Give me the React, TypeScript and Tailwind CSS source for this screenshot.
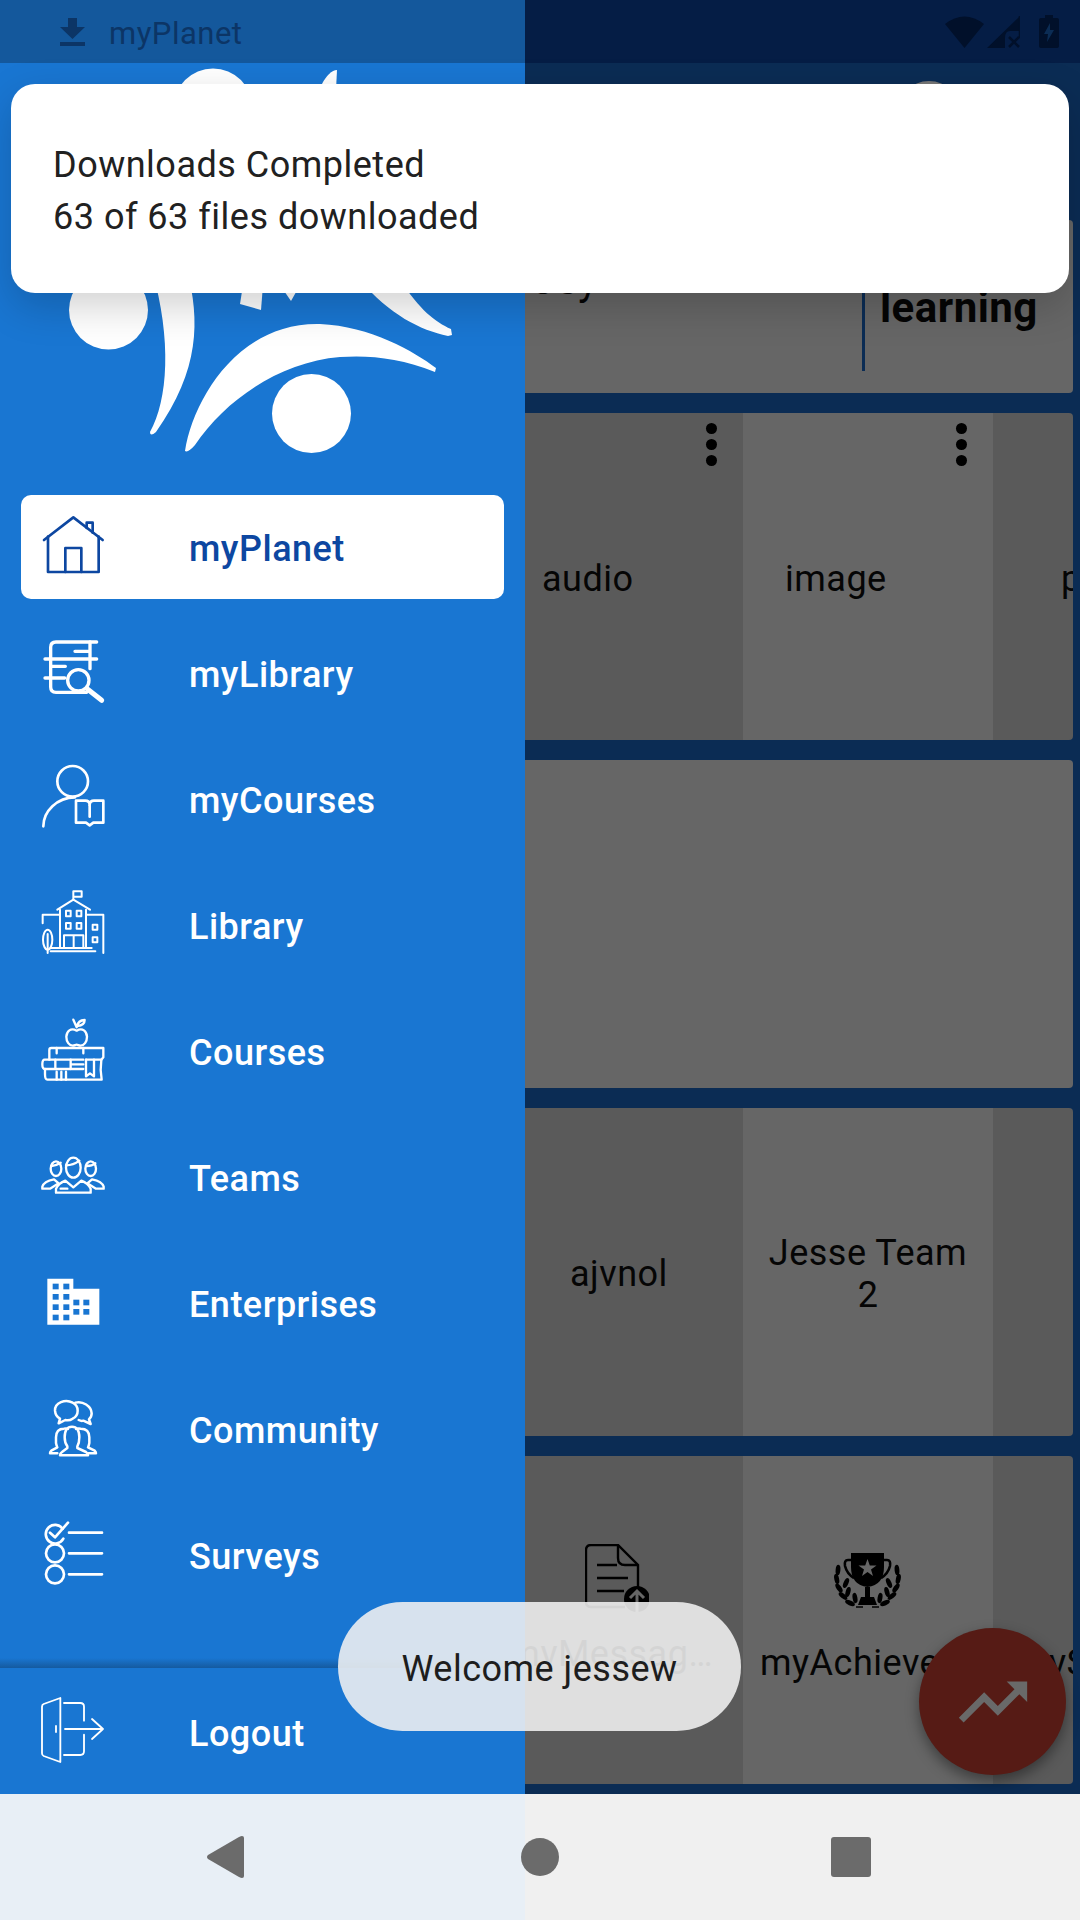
import React from 'react';

const IconBox = ({ children }: { children: React.ReactNode }) => (
  <svg
    viewBox="0 0 186 186"
    className="w-[62px] h-[62px] shrink-0 overflow-visible"
    fill="none"
    stroke="currentColor"
    strokeWidth="8"
    strokeLinecap="round"
    strokeLinejoin="round"
  >
    {children}
  </svg>
);

const HomeIcon = () => (
  <IconBox>
    <path d="M6 72 94 4 182 72" />
    <path d="M134 36V20H152V50" />
    <path d="M18 62V168H170V62" />
    <path d="M70 168V96H118V168" />
  </IconBox>
);

const MyLibraryIcon = () => (
  <IconBox>
    <g strokeWidth="10">
      <path d="M164 0H42Q26 0 26 16V51" />
      <path d="M9 51H164M99 28H144M144 0V51M144 51V80" />
      <path d="M26 51V108M26 73H70M9 108H68" />
      <path d="M26 108V135Q26 151 42 151H134" />
      <circle cx="109" cy="115" r="32" />
    </g>
    <path d="M136 141 179 175" strokeWidth="15" />
  </IconBox>
);

const MyCoursesIcon = () => (
  <IconBox>
    <circle cx="92" cy="40" r="46" />
    <path d="M4 175C4 130 45 88 99 88" />
    <path d="M102 98H130Q142 98 143 110Q144 98 156 98H184V164H154L143 172 132 164H102Z" />
    <path d="M143 112V146" />
  </IconBox>
);

const SchoolIcon = () => (
  <IconBox>
    <g strokeWidth="6">
      <path d="M94 17V-8H119V8H94" />
      <path d="M46 47 94 17 144 47" />
      <path d="M54 47V162M132 47V162" />
      <rect x="72" y="50" width="14" height="17" />
      <rect x="104" y="50" width="14" height="17" />
      <rect x="72" y="87" width="14" height="17" />
      <rect x="104" y="87" width="14" height="17" />
      <path d="M66 162V124H124V162M95 124V162" />
      <path d="M54 62H2V88M132 62H184V177" />
      <rect x="152" y="92" width="14" height="15" />
      <rect x="152" y="130" width="14" height="15" />
      <ellipse cx="17" cy="137" rx="14" ry="30" />
      <path d="M17 120V177M26 162H149M26 172H160" />
    </g>
  </IconBox>
);

const CoursesIcon = () => (
  <IconBox>
    <g strokeWidth="7">
      <path d="M104 32C122 22 134 34 135 50C135 66 126 77 116 77C110 77 108 74 104 74C100 74 98 77 92 77C82 77 73 66 73 50C74 34 86 22 104 32Z" />
      <path d="M94 -1 104 22M106 18Q108 1 128 0Q128 16 106 18Z" />
      <path d="M22 119V90Q22 84 28 84H184V112L178 119" />
      <path d="M44 84V100M124 84V100" />
      <path d="M124 119H8Q1 119 1 133Q1 147 8 147H124" />
      <path d="M40 119V147M86 119V147M124 133H86" />
      <path d="M132 119H178L176 150 179 179H16Q9 179 9 163V147" />
      <path d="M132 119V169L144 160 156 169V119" />
      <path d="M44 155V179M58 155V179M72 155V179" />
    </g>
  </IconBox>
);

const TeamsIcon = () => (
  <IconBox>
    <g strokeWidth="7">
      <ellipse cx="42" cy="68" rx="16" ry="22" />
      <ellipse cx="94" cy="65" rx="22" ry="30" />
      <ellipse cx="146" cy="68" rx="16" ry="22" />
      <path d="M28 60Q44 58 56 50M72 58Q94 58 112 44M134 60Q150 60 160 52" />
      <path d="M1 128V122Q6 106 36 100L50 112 24 128Z" />
      <path d="M185 128V122Q180 106 150 100L136 112 162 128Z" />
      <path d="M42 140V128Q50 112 70 104L94 124 118 104Q138 112 146 128V140Z" />
      <path d="M56 128H76" />
    </g>
  </IconBox>
);

const EnterpriseIcon = () => {
  const left = [32, 64];
  const leftRows = [35, 66, 97, 128];
  const right = [94, 124];
  const rightRows = [83, 111];
  return (
    <IconBox>
      <g stroke="none">
        <path d="M16 20H94V50H172V158H16Z" fill="currentColor" />
        {left.map((x) =>
          leftRows.map((y) => <rect key={`${x}-${y}`} x={x} y={y} width="18" height="17" fill="#1976d2" />),
        )}
        {right.map((x) =>
          rightRows.map((y) => <rect key={`${x}-${y}`} x={x} y={y} width="18" height="17" fill="#1976d2" />),
        )}
      </g>
    </IconBox>
  );
};

const CommunityIcon = () => (
  <IconBox>
    <g strokeWidth="7.5">
      <path d="M92 62C112 52 112 24 92 14C70 2 38 14 39 38C40 50 46 58 54 62L50 76 70 66C78 68 86 66 92 62Z" />
      <path d="M100 14C122 8 148 24 149 46C149 54 146 60 141 64L146 78 124 68C118 70 114 68 110 66" />
      <path d="M68 118Q68 86 90 86Q112 86 112 118Q112 135 106 145V150L132 162Q138 166 138 172H54Q54 166 60 162L76 150V145Q68 135 68 118Z" />
      <path d="M102 93Q108 90 116 92Q142 92 142 118V135Q140 145 138 148L158 158Q162 162 162 166H140" />
      <path d="M78 93Q72 90 66 92Q42 92 42 118V135Q44 145 46 148L28 158Q24 162 24 166H46" />
    </g>
  </IconBox>
);

const SurveysIcon = () => (
  <IconBox>
    <path d="M62 14A28 28 0 1 0 64 44" />
    <path d="M24 26 39 40 78 -4" />
    <circle cx="39" cy="88" r="27" />
    <circle cx="39" cy="151" r="27" />
    <path d="M81 26H180M81 88H180M81 151H180" />
  </IconBox>
);

const LogoutIcon = () => (
  <IconBox>
    <g strokeWidth="5.5">
      <path d="M55 -6 5 12Q0 14 0 20V160Q0 166 5 168L55 186Z" />
      <path d="M66 9H115Q126 9 126 20V62M126 104V154Q126 165 115 165H66" />
      <path d="M69 87H183M150 57 183 87 150 117" />
      <path d="M42 78V96" />
    </g>
  </IconBox>
);

const MENU = [
  { label: 'myPlanet', icon: <HomeIcon />, active: true },
  { label: 'myLibrary', icon: <MyLibraryIcon /> },
  { label: 'myCourses', icon: <MyCoursesIcon /> },
  { label: 'Library', icon: <SchoolIcon /> },
  { label: 'Courses', icon: <CoursesIcon /> },
  { label: 'Teams', icon: <TeamsIcon /> },
  { label: 'Enterprises', icon: <EnterpriseIcon /> },
  { label: 'Community', icon: <CommunityIcon /> },
  { label: 'Surveys', icon: <SurveysIcon /> },
];

const Logo = () => (
  <svg viewBox="0 63 525 421" className="w-[525px] h-[421px] block" fill="#ffffff">
    <circle cx="213" cy="108" r="39.5" />
    <circle cx="108.5" cy="310" r="39.5" />
    <circle cx="311.5" cy="413.5" r="39.5" />
    <path d="M185 451C193 400 238 322 320 324C370 326 415 352 436 368L435 372C400 358 370 355 340 357C280 362 225 400 195 445Q188 453 185 451Z" />
    <path d="M150 432C168 400 172 340 152 270L187 270C200 320 200 370 156 432Q150 437 150 432Z" />
    <path d="M360 280C390 315 420 330 448 336L452 335 451 329C435 322 420 310 400 280Z" />
    <path d="M243 285H263L261 310 240 304Z" />
    <path d="M280 285H300L291 301Z" />
    <path d="M322 84C326 76 332 70 337 70L336 90H320Z" />
  </svg>
);

const Dots = () => (
  <div className="flex flex-col gap-[5px] items-end pr-[26px] pt-[10px] h-[54px]">
    <div className="w-[11px] h-[11px] rounded-full bg-black" />
    <div className="w-[11px] h-[11px] rounded-full bg-black" />
    <div className="w-[11px] h-[11px] rounded-full bg-black" />
  </div>
);

const DocIcon = () => (
  <svg viewBox="0 0 64 69" className="w-[64px] h-[69px] block" fill="none" stroke="#000" strokeWidth="2.4">
    <path d="M40 63H6Q1 63 1 58V6Q1 1 6 1H33L53 21V48" />
    <path d="M33 1V14Q33 21 40 21H53" />
    <path d="M12 21H32M12 34H43M12 47H39" />
    <circle cx="52" cy="55" r="13" fill="#000" stroke="none" />
    <path d="M52 68V47M45 54 52 47 59 54" stroke="#666" strokeWidth="3" />
  </svg>
);

const TrophyIcon = () => {
  const leaves = [
    [5, 17, 5],
    [3.7, 26, -12],
    [6, 35, -35],
    [10, 43, -50],
    [17, 50, -65],
    [13, 30, 25],
    [15, 39, 15],
    [22, 45, -10],
  ];
  return (
    <svg viewBox="0 0 69 55" className="w-[69px] h-[55px] block" fill="#000">
      <path d="M18 0H51V14Q51 32 34.5 34Q18 32 18 14Z" />
      <path d="M18 7H15Q11 7 12 13Q14 21 21 25M51 7H54Q58 7 57 13Q55 21 48 25" fill="none" stroke="#000" strokeWidth="2.6" />
      <path
        d="M34.5 6 36.8 12.5H43.5L38 16.5 40 23 34.5 19 29 23 31 16.5 25.5 12.5H32.2Z"
        fill="#666"
      />
      <path d="M32 34H37V44H41L44 52H25L28 44H32Z" />
      <path d="M23 54H30M39 54H46" stroke="#000" strokeWidth="1.5" />
      {leaves.map(([x, y, r]) => (
        <g key={`${x}-${y}`}>
          <ellipse cx={x} cy={y} rx="2.4" ry="5.2" transform={`rotate(${r} ${x} ${y})`} />
          <ellipse cx={69 - x} cy={y} rx="2.4" ry="5.2" transform={`rotate(${-r} ${69 - x} ${y})`} />
        </g>
      ))}
    </svg>
  );
};

const App: React.FC = () => {
  return (
    <div className="relative w-[1080px] h-[1920px] overflow-hidden flex flex-col font-['Roboto',sans-serif] tracking-[.5px] bg-[#0b2c54]">
      {/* status bar */}
      <div className="h-[63px] shrink-0 flex items-center bg-[linear-gradient(to_right,#14589c_525px,#051d45_525px)]">
        <div className="w-[525px] flex items-center pl-[60px] gap-[24px] text-[#0c3566]">
          <svg viewBox="0 0 25 28" className="w-[25px] h-[28px]" fill="currentColor">
            <path d="M8 0H17V9H25L12.5 21 0 9H8ZM0 24H25V28H0Z" />
          </svg>
          <span className="text-[31px] leading-none pt-[4px]">myPlanet</span>
        </div>
        <div className="flex-1 flex items-center justify-end pr-[21px]">
          <svg viewBox="0 0 39 33" className="w-[39px] h-[33px]" fill="#01102a">
            <path d="M0 9Q19.5 -6 39 9L19.5 33Z" />
          </svg>
          <svg viewBox="0 0 33 32" className="w-[33px] h-[32px] ml-[3px]" fill="none">
            <path d="M0 32 33 0V15H23Q18 15 18 22V32Z" fill="#01102a" />
            <path d="M33 0V22M22 21 32 31M32 21 22 31" stroke="#01102a" strokeWidth="2.5" />
          </svg>
          <svg viewBox="0 0 20 33" className="w-[20px] h-[33px] ml-[19px]" fill="#01102a">
            <path d="M6 0H14V3H18Q20 3 20 5V31Q20 33 18 33H2Q0 33 0 31V5Q0 3 2 3H6Z" />
            <path d="M11 8 5 19H9L8 27 15 15H11Z" fill="#0b2c54" />
          </svg>
        </div>
      </div>

      <div className="flex-1 flex min-h-0">
        {/* drawer */}
        <div className="w-[525px] shrink-0 bg-[#1976d2] flex flex-col">
          <Logo />
          <nav>
            {MENU.map((item) => (
              <div key={item.label} className="h-[126px] flex items-center">
                <div
                  className={
                    item.active
                      ? 'ml-[21px] w-[483px] h-[104px] rounded-[10px] bg-white text-[#0d47a1] flex items-center pl-[21px]'
                      : 'ml-[21px] w-[483px] h-[104px] text-white flex items-center pl-[21px]'
                  }
                >
                  {item.icon}
                  <span className="ml-[85px] pt-[3px] text-[36px] font-medium leading-none">{item.label}</span>
                </div>
              </div>
            ))}
          </nav>
          <div className="flex-1 flex flex-col justify-end">
            <div className="h-[10px] bg-gradient-to-b from-[#1976d2] to-[#155a9f]" />
          </div>
          <div className="h-[126px] shrink-0 flex items-center pl-[42px] text-white">
            <LogoutIcon />
            <span className="ml-[85px] pt-[5px] text-[36px] font-medium leading-none">Logout</span>
          </div>
        </div>

        {/* dimmed dashboard behind the drawer */}
        <div className="flex-1 min-w-0 pr-[7px] pb-[10px] flex flex-col gap-[20px] text-[36px] text-[#050505]">
          <div className="h-[137px] pt-[18px] flex justify-end pr-[112px]">
            <div className="w-[64px] h-[64px] rounded-full bg-[#777777]" />
          </div>
          <div className="h-[173px] rounded-r-[4px] bg-[#666666] overflow-hidden flex">
            <div className="w-[337px] pl-[6px] pt-[36px] text-[42px] leading-[48px]">oey</div>
            <div className="h-[151px] w-[3px] bg-[#0b2c54]" />
            <div className="pl-[15px] pt-[64px] text-[42px] font-bold leading-[48px]">learning</div>
          </div>
          <div className="h-[327px] rounded-r-[4px] overflow-hidden flex bg-[#5a5a5a]">
            <div className="w-[218px] shrink-0">
              <Dots />
              <div className="mt-[91px] pl-[17px] leading-[42px]">audio</div>
            </div>
            <div className="w-[250px] shrink-0 bg-[#666666]">
              <Dots />
              <div className="mt-[91px] pl-[42px] leading-[42px]">image</div>
            </div>
            <div className="flex-1 pl-[68px] pt-[145px] leading-[42px] overflow-hidden">p</div>
          </div>
          <div className="h-[328px] shrink-0 rounded-r-[4px] bg-[#666666]" />
          <div className="h-[328px] rounded-r-[4px] overflow-hidden flex bg-[#5a5a5a]">
            <div className="w-[218px] shrink-0 flex items-center pl-[45px] pt-[4px] leading-[42px]">ajvnol</div>
            <div className="w-[250px] shrink-0 bg-[#666666] flex items-center justify-center pt-[4px] text-center leading-[42px]">
              <span>
                Jesse Team
                <br />2
              </span>
            </div>
          </div>
          <div className="h-[328px] rounded-r-[4px] overflow-hidden flex bg-[#5a5a5a]">
            <div className="w-[218px] shrink-0 flex flex-col">
              <div className="pl-[60px] pt-[88px]">
                <DocIcon />
              </div>
              <div className="mt-[20px] pr-[30px] flex justify-end whitespace-nowrap leading-[42px]">myMessag…</div>
            </div>
            <div className="w-[250px] shrink-0 bg-[#666666] flex flex-col overflow-hidden">
              <div className="pl-[90px] pt-[97px]">
                <TrophyIcon />
              </div>
              <div className="mt-[34px] pl-[17px] whitespace-nowrap leading-[42px]">myAchievements</div>
            </div>
            <div className="flex-1 pl-[24px] pt-[186px] whitespace-nowrap leading-[42px]">myS</div>
          </div>
        </div>
      </div>

      {/* android nav bar */}
      <div className="h-[126px] shrink-0 flex items-center bg-[linear-gradient(to_right,#e8eff6_525px,#f0f0f0_525px)] pl-[207px]">
        <svg viewBox="0 0 37 42" className="w-[37px] h-[42px]" fill="#6b6b6b">
          <path d="M35 0Q37 0 37 2V40Q37 42 35 42Q34 42 32 41L1 23Q-1 21 1 19L32 1Q34 0 35 0Z" />
        </svg>
        <div className="ml-[277px] w-[38px] h-[38px] rounded-full bg-[#6b6b6b]" />
        <div className="ml-[272px] w-[40px] h-[40px] rounded-[3px] bg-[#6b6b6b]" />
      </div>

      {/* download dialog */}
      <div className="absolute left-[11px] top-[84px] w-[1058px] h-[209px] rounded-[24px] bg-white pl-[42px] pt-[55px] text-[36px] leading-[52px] text-[#212121] shadow-[0_14px_40px_rgba(0,0,0,0.18)]">
        <div>Downloads Completed</div>
        <div>63 of 63 files downloaded</div>
      </div>

      {/* fab */}
      <div className="absolute left-[919px] top-[1628px] w-[147px] h-[147px] rounded-full bg-[#561b15] flex items-center justify-center shadow-[0_6px_14px_rgba(0,0,0,0.4)]">
        <svg viewBox="0 0 24 24" className="w-[82px] h-[82px]" fill="#696969">
          <path d="M16 6l2.29 2.29-4.88 4.88-4-4L2 16.59 3.41 18l6-6 4 4 6.3-6.29L22 12V6z" />
        </svg>
      </div>

      {/* toast */}
      <div className="absolute left-[338px] top-[1602px] w-[403px] h-[129px] rounded-full bg-[#f1f1f1]/[.88] flex items-center justify-center pt-[4px] text-[36px] text-[#1d1d1d]">
        Welcome jessew
      </div>
    </div>
  );
};

export default App;
